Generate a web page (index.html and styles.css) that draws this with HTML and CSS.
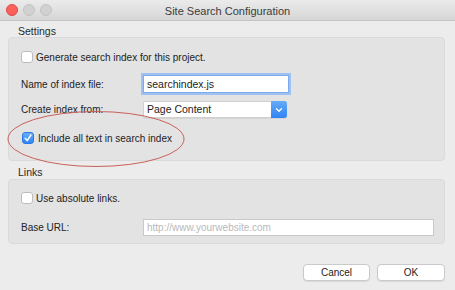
FILE: index.html
```html
<!doctype html>
<html lang="en">
  <head>
    <meta charset="UTF-8" />
    <title>Site Search Configuration</title>
    <link rel="stylesheet" href="styles.css">
  </head>
  <body>
    <div class="window">
      <div class="titlebar">
        <div class="lights">
          <span class="close"></span>
          <span class="minimize"></span>
          <span class="maximize"></span>
        </div>
        <div class="title">Site Search Configuration</div>
        <div></div>
      </div>

      <div class="content">
        <div class="section-label">Settings</div>
        <div class="group settings">
          <div class="row check-row first">
            <span class="checkbox"></span>
            <span>Generate search index for this project.</span>
          </div>
          <div class="row name-row">
            <span class="field-label">Name of index file:</span>
            <span class="input focused">searchindex.js</span>
          </div>
          <div class="row source-row">
            <span class="field-label">Create index from:</span>
            <span class="select">
              <span class="select-value">Page Content</span>
              <span class="select-arrow">
                <svg width="8" height="6" viewBox="0 0 8 6"><path d="M1.5 1.8 L4 4.2 L6.5 1.8" fill="none" stroke="#fff" stroke-width="1.3" stroke-linecap="round" stroke-linejoin="round"/></svg>
              </span>
            </span>
          </div>
          <div class="row check-row include-row">
            <span class="checkbox checked">
              <svg width="10" height="10" viewBox="0 0 10 10"><path d="M2.2 5.3 L4.2 7.6 L7.9 2" fill="none" stroke="#fff" stroke-width="1.5" stroke-linecap="round" stroke-linejoin="round"/></svg>
            </span>
            <span>Include all text in search index</span>
          </div>
        </div>

        <div class="section-label links-label">Links</div>
        <div class="group links">
          <div class="row check-row first">
            <span class="checkbox"></span>
            <span>Use absolute links.</span>
          </div>
          <div class="row url-row">
            <span class="field-label">Base URL:</span>
            <span class="input wide placeholder">http://www.yourwebsite.com</span>
          </div>
        </div>

        <div class="buttons">
          <button class="btn cancel">Cancel</button>
          <button class="btn ok">OK</button>
        </div>
      </div>

      <svg class="annotation" width="455" height="290" viewBox="0 0 455 290">
        <ellipse cx="96" cy="139" rx="88" ry="27.5" fill="none" stroke="#c8605a" stroke-width="1"/>
      </svg>
    </div>
  </body>
</html>
```

FILE: styles.css
```css
* {
  margin: 0;
  padding: 0;
  box-sizing: border-box;
}
body {
  background: #ececec;
  font-family: "Liberation Sans", Arial, sans-serif;
  font-size: 10px;
  color: #222;
  overflow: hidden;
}
.window {
  position: relative;
  width: 455px;
  height: 290px;
  background: #ececec;
}
.titlebar {
  height: 21px;
  display: grid;
  grid-template-columns: 1fr auto 1fr;
  align-items: center;
  background: linear-gradient(#ebebeb, #d6d6d6);
  border-bottom: 1px solid #c4c4c4;
}
.lights {
  display: flex;
  gap: 5px;
  padding-left: 6px;
}
.lights span {
  width: 12px;
  height: 12px;
  border-radius: 50%;
  background: #d1d1d1;
  border: 1px solid #c3c3c3;
}
.lights .close {
  background: #fc605c;
  border-color: #de4a45;
}
.title {
  font-size: 11px;
  color: #3b3b3b;
  padding-top: 1px;
}
.content {
  padding: 0 10px 0 8px;
}
.section-label {
  padding: 3px 0 0 10px;
  height: 16px;
  line-height: 14px;
  font-size: 10.5px;
  color: #2a2a2a;
}
.links-label {
  height: 18px;
  padding-top: 4px;
}
.group {
  background: #e3e3e3;
  border: 1px solid #dadada;
  border-radius: 4px;
  padding: 0 10px 0 12px;
  display: flex;
  flex-direction: column;
}
.settings {
  height: 124px;
}
.links {
  height: 65px;
}
.row {
  display: flex;
  align-items: center;
  height: 18px;
}
.first {
  margin-top: 10px;
}
.links .first {
  margin-top: 9px;
}
.name-row {
  margin-top: 9px;
}
.source-row {
  margin-top: 7px;
  height: 19px;
}
.include-row {
  margin-top: 10px;
}
.url-row {
  margin-top: 11px;
}
.checkbox {
  width: 12px;
  height: 12px;
  margin-right: 3px;
  border-radius: 3px;
  background: #fff;
  border: 1px solid #bdbdbd;
  display: flex;
  align-items: center;
  justify-content: center;
}
.checkbox.checked {
  background: linear-gradient(#69aef9, #2f83f4);
  border-color: #2c7be5;
  margin-left: 1px;
  margin-right: 4px;
}
.field-label {
  width: 122px;
  flex: none;
}
.input {
  height: 18px;
  width: 146px;
  background: #fff;
  border: 1px solid #c9c9c9;
  padding-left: 3px;
  line-height: 16px;
  font-size: 10.5px;
}
.input.focused {
  border-color: #7ba9ec;
  box-shadow: 0 0 0 2px #9fc2f3;
}
.input.wide {
  width: 291px;
  height: 17px;
  line-height: 15px;
  font-size: 10px;
}
.placeholder {
  color: #b9b9b9;
}
.select {
  display: flex;
  height: 17px;
  width: 144px;
  background: #fff;
  border: 1px solid #d0d0d0;
  border-radius: 2px;
  box-shadow: 0 1px 0 rgba(0, 0, 0, 0.06);
}
.select-value {
  flex: 1;
  padding-left: 3px;
  line-height: 15px;
  font-size: 10.5px;
}
.select-arrow {
  width: 16px;
  margin: -1px -1px -1px 0;
  border-radius: 0 3px 3px 0;
  background: linear-gradient(#65abf9, #2f83f4);
  display: flex;
  align-items: center;
  justify-content: center;
}
.buttons {
  display: flex;
  justify-content: flex-end;
  gap: 7px;
  margin-top: 20px;
}
.btn {
  height: 17px;
  background: #fff;
  border: 1px solid #cacaca;
  border-radius: 4px;
  box-shadow: 0 1px 1px rgba(0, 0, 0, 0.08);
  font-family: inherit;
  font-size: 10px;
  color: #222;
}
.cancel {
  width: 67px;
}
.ok {
  width: 68px;
}
.annotation {
  position: absolute;
  left: 0;
  top: 0;
  pointer-events: none;
}
```
